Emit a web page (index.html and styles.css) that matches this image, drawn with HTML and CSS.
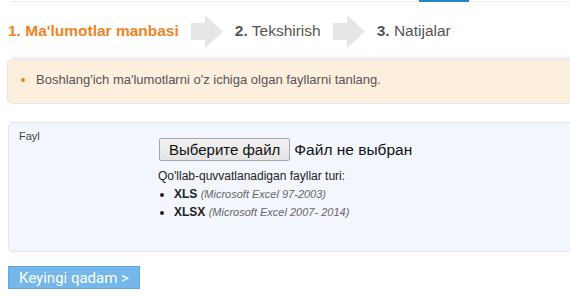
FILE: index.html
```html
<!DOCTYPE html>
<html lang="uz">
<head>
    <meta charset="UTF-8">
    <meta name="viewport" content="width=device-width, initial-scale=1.0">
    <title>Import</title>
    <link rel="stylesheet" href="styles.css">
</head>
<body>
    <div class="topline"><span class="tab-mark"></span></div>

    <div class="steps">
        <div class="step active">1. Ma'lumotlar manbasi</div>
        <svg class="step-arrow" width="32" height="33" viewBox="0 0 32 33">
            <polygon points="0,8 14,8 14,0 32,16.5 14,33 14,25 0,25" fill="#e6e6e6"/>
        </svg>
        <div class="step"><b>2.</b> Tekshirish</div>
        <svg class="step-arrow" width="32" height="33" viewBox="0 0 32 33">
            <polygon points="0,8 14,8 14,0 32,16.5 14,33 14,25 0,25" fill="#e6e6e6"/>
        </svg>
        <div class="step"><b>3.</b> Natijalar</div>
    </div>

    <div class="alert">
        <ul>
            <li>Boshlang'ich ma'lumotlarni o'z ichiga olgan fayllarni tanlang.</li>
        </ul>
    </div>

    <div class="panel">
        <div class="field-label">Fayl</div>
        <div class="field-body">
            <div class="file-row">
                <button class="file-btn" type="button">Выберите файл</button>
                <span class="file-name">Файл не выбран</span>
            </div>
            <div class="hint">Qo'llab-quvvatlanadigan fayllar turi:</div>
            <ul class="types">
                <li><b>XLS</b> <i>(Microsoft Excel 97-2003)</i></li>
                <li><b>XLSX</b> <i>(Microsoft Excel 2007- 2014)</i></li>
            </ul>
        </div>
    </div>

    <button class="next-btn" type="button">Keyingi qadam &gt;</button>
</body>
</html>
```

FILE: styles.css
```css
html, body {
    overflow: hidden;
}

body {
    margin: 0;
    font-family: "Liberation Sans", Arial, sans-serif;
    color: #555;
    background: #fff;
}

.topline {
    display: flex;
    margin-left: 10px;
    height: 1px;
    border-bottom: 1px solid #ececec;
}

.tab-mark {
    display: block;
    width: 50px;
    height: 2px;
    margin-left: 409px;
    background: #1f88c8;
}

.steps {
    display: flex;
    align-items: center;
    gap: 12px;
    height: 55px;
    margin-left: 12px;
    border-bottom: 1px solid #ececec;
    box-shadow: 0 1px 1px #f3f3f3;
}

.step {
    font-size: 15.5px;
    color: #555;
    margin-top: 3px;
}

.steps .step:first-child {
    margin-left: -4px;
}

.step.active {
    color: #f0831e;
    font-weight: bold;
}

.step-arrow {
    display: block;
    margin-top: 3px;
}

.alert {
    margin: 1px -10px 0 7px;
    height: 43px;
    display: flex;
    align-items: center;
    background: #fdefde;
    border: 1px solid #e3e6ec;
    border-radius: 5px;
}

.alert ul {
    margin: 0 0 4px;
    padding-left: 28px;
    font-size: 13px;
    color: #555;
}

.alert li::marker {
    color: #f0831e;
}

.panel {
    display: flex;
    margin: 18px -10px 0 8px;
    height: 128px;
    background: #f3f6fd;
    border: 1px solid #e1e5ec;
    border-radius: 5px;
}

.field-label {
    width: 149px;
    padding: 7px 0 0 10px;
    box-sizing: border-box;
    font-size: 11px;
    color: #444;
}

.field-body {
    padding-top: 15px;
}

.file-row {
    display: flex;
    align-items: center;
    gap: 4px;
    margin-left: 1px;
}

.file-btn {
    font-family: "Liberation Sans", Arial, sans-serif;
    font-size: 15px;
    color: #111;
    height: 23px;
    padding: 0 9px;
    background: linear-gradient(#f3f3f3, #e4e4e4);
    border: 1px solid #a6a6a6;
    border-radius: 2px;
}

.file-name {
    font-size: 15.5px;
    color: #111;
}

.hint {
    margin-top: 8px;
    font-size: 12px;
    color: #222;
}

.types {
    margin: 2px 0 0;
    padding-left: 16px;
    font-size: 12px;
    color: #222;
}

.types li {
    line-height: 18px;
}

.types i {
    color: #666;
    font-size: 11px;
}

.next-btn {
    display: block;
    margin: 14px 0 0 8px;
    width: 132px;
    height: 23px;
    padding: 0;
    font-family: Roboto, "Liberation Sans", sans-serif;
    font-size: 15px;
    color: #fff;
    background: #74b7ea;
    border: 1px solid #62a9e0;
    border-radius: 0;
}
```
